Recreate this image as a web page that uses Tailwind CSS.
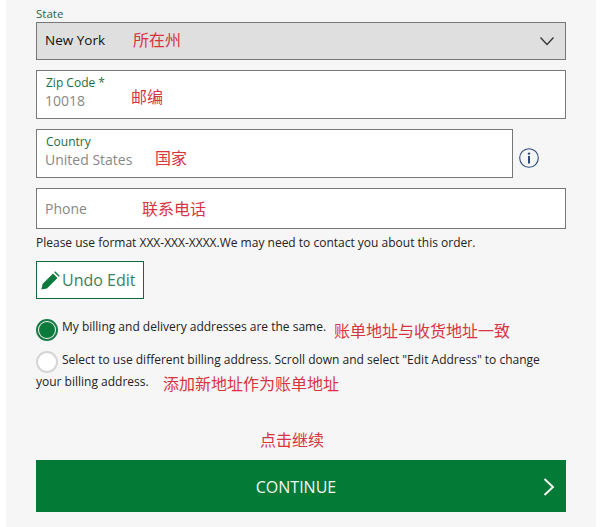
<!DOCTYPE html>
<html lang="en">
<head>
    <meta charset="UTF-8" />
    <title>Billing address</title>
    <script src="https://cdn.jsdelivr.net/npm/@tailwindcss/browser@4"></script>
</head>
<body class="bg-white">
    <div class="relative h-[527px] w-[600px] overflow-hidden font-['Open_Sans','Noto_Sans_CJK_SC',sans-serif]">
        <div class="ml-[6px] h-full w-[590px] bg-[#f6f6f6] pl-[30px] pr-[30px] pt-[7px] text-[#222]">
            <!-- State -->
            <p class="h-[15px] text-[11.5px] leading-[14px] text-[#1e6b41]">State</p>
            <div class="flex h-[38px] items-center justify-between border border-[#777] bg-[#dfdfdf] pl-2 pr-[10px]">
                <span class="-mt-[2px] text-[13.5px] text-[#111]">New York</span>
                <svg class="h-3 w-4" viewBox="0 0 16 12" fill="none" stroke="#333" stroke-width="1.3"><path d="M1.5 2.5 8 9.5l6.5-7" /></svg>
            </div>
            <!-- Zip -->
            <div class="mt-[10px] h-[49px] border border-[#777] bg-white pl-2 pt-1">
                <p class="pl-px text-[12px] leading-[16px] text-[#1e6b41]">Zip Code *</p>
                <p class="text-[14px] leading-[20px] text-[#888]">10018</p>
            </div>
            <!-- Country -->
            <div class="mt-[10px] flex items-center">
                <div class="h-[49px] w-[477px] border border-[#777] bg-white pl-2 pt-1">
                    <p class="pl-px text-[12px] leading-[16px] text-[#1e6b41]">Country</p>
                    <p class="text-[14px] leading-[20px] text-[#888]">United States</p>
                </div>
                <svg class="ml-[6px] mt-[8px] h-[20px] w-[20px]" viewBox="0 0 20 20" fill="none">
                    <circle cx="10" cy="10" r="9.3" stroke="#2b4a7a" stroke-width="1.1" />
                    <circle cx="10" cy="5.6" r="1.2" fill="#2b4a7a" />
                    <rect x="9" y="8" width="2" height="7.5" fill="#2b4a7a" />
                </svg>
            </div>
            <!-- Phone -->
            <div class="mt-[10px] flex h-[41px] items-center border border-[#777] bg-white pl-2">
                <span class="text-[14px] text-[#888]">Phone</span>
            </div>
            <p class="mt-[5px] text-[12px] leading-[17px] text-[#222]">Please use format XXX-XXX-XXXX.We may need to contact you about this order.</p>
            <!-- Undo -->
            <button class="mt-[10px] flex h-[38px] w-[108px] items-center border border-[#0f6b3c] bg-white pl-[4px] text-[16px] text-[#3c7f5e]" type="button">
                <svg class="mr-[2px] h-[19px] w-[19px]" viewBox="0 0 19 19" fill="#0f7a3e"><path d="M0.5 18.5l1-5.5L12 2.5l4.5 4.5L6 17.5z" /><path d="M13.2 1.3l1-1 4.5 4.5-1 1z" /></svg>
                Undo Edit
            </button>
            <!-- Radios -->
            <div class="mt-5 flex h-[24px] items-start">
                <span class="flex h-[22px] w-[22px] shrink-0 items-center justify-center rounded-full border-2 border-[#1a7a48]">
                    <span class="h-[16px] w-[16px] rounded-full bg-[#0b7a3b]"></span>
                </span>
                <span class="ml-[4px] -mt-px text-[12px] leading-[17px]">My billing and delivery addresses are the same.</span>
            </div>
            <div class="relative mt-[8px] text-[12px] leading-[22px]">
                <span class="absolute left-0 top-[2px] h-[22px] w-[22px] rounded-full border-2 border-[#d5d5d5] bg-white"></span>
                <p class="-mt-[2px] indent-[26px]">Select to use different billing address. Scroll down and select "Edit Address" to change your billing address.</p>
            </div>
            <!-- Continue -->
            <button class="relative mt-[67px] flex h-[52px] w-full items-center justify-center bg-[#037a35] pr-[10px] pt-[2px] text-[16px] text-[#f2f7f2]" type="button">
                CONTINUE
                <svg class="absolute right-[11px] top-[18px] h-[18px] w-[12px]" viewBox="0 0 12 18" fill="none" stroke="#f2f7f2" stroke-width="2"><path d="M1.5 1 10 9l-8.5 8" /></svg>
            </button>
        </div>
        <!-- red annotations lying over the form -->
        <span class="absolute left-[133px] top-[29px] text-[16px] leading-[22px] text-[#d8343f]">所在州</span>
        <span class="absolute left-[131px] top-[86px] text-[16px] leading-[22px] text-[#d8343f]">邮编</span>
        <span class="absolute left-[155px] top-[147px] text-[16px] leading-[22px] text-[#d8343f]">国家</span>
        <span class="absolute left-[142px] top-[198px] text-[16px] leading-[22px] text-[#d8343f]">联系电话</span>
        <span class="absolute left-[334px] top-[320px] text-[16px] leading-[22px] text-[#d8343f]">账单地址与收货地址一致</span>
        <span class="absolute left-[163px] top-[373px] text-[16px] leading-[22px] text-[#d8343f]">添加新地址作为账单地址</span>
        <span class="absolute left-[260px] top-[429px] text-[16px] leading-[22px] text-[#d8343f]">点击继续</span>
    </div>
</body>
</html>
